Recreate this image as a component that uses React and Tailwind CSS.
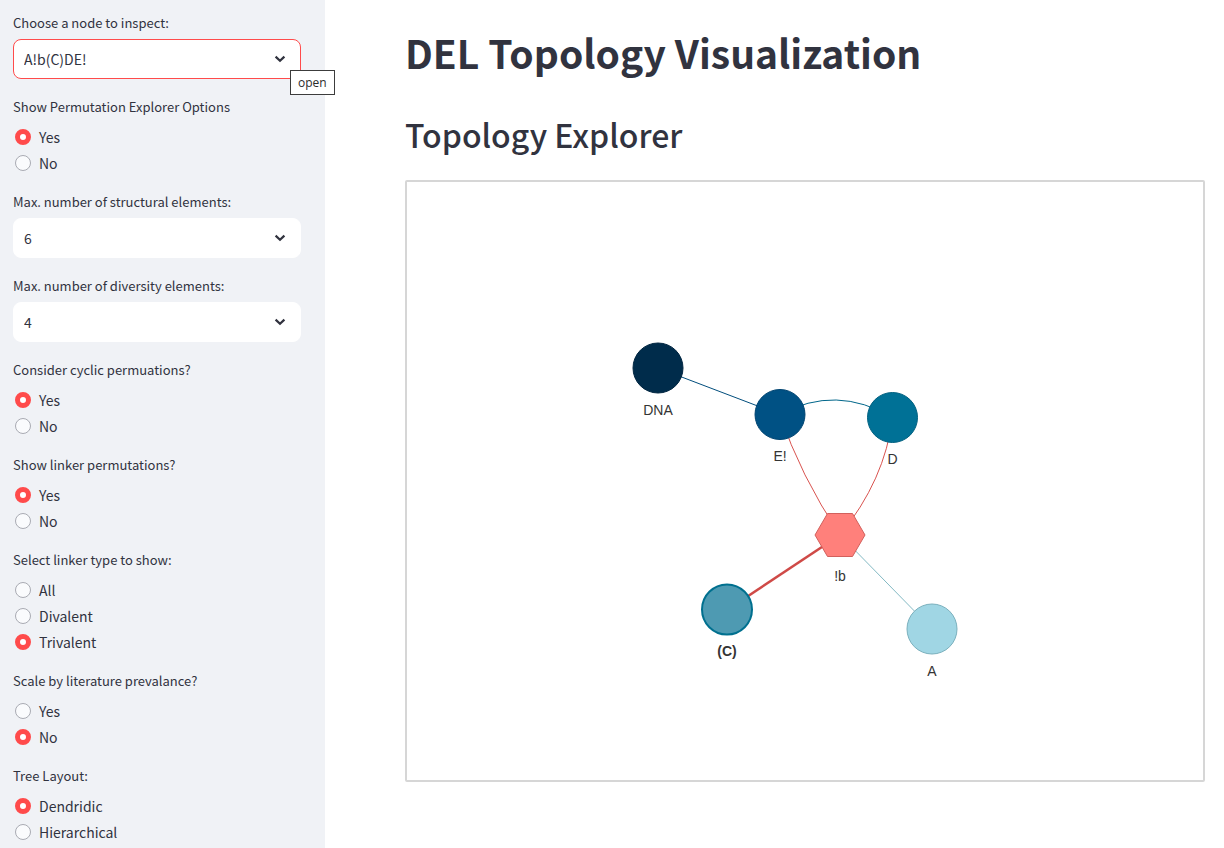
import { useId, useState } from "react";

function SelectField({ label, options, focused, hint }) {
  const id = useId();
  const [value, setValue] = useState(options[0]);
  return (
    <div className="flex flex-col gap-1 pb-4">
      <label htmlFor={id} className="text-[13px] leading-6">
        {label}
      </label>
      <div className="relative">
        <select
          id={id}
          value={value}
          onChange={(e) => setValue(e.target.value)}
          className={
            "block h-10 w-full appearance-none rounded-lg border bg-white pr-10 pl-2.5 text-sm outline-none " +
            (focused ? "border-[#ff4b4b]" : "border-white")
          }
        >
          {options.map((o) => (
            <option key={o}>{o}</option>
          ))}
        </select>
        <svg
          viewBox="0 0 16 16"
          className="pointer-events-none absolute top-3 right-3 size-4"
          fill="none"
          stroke="#31333f"
          strokeWidth="2.2"
          aria-hidden="true"
        >
          <path d="M2.600 5.600L7 9.800L11.400 5.600" />
        </svg>
        {hint && (
          <span
            role="tooltip"
            className="absolute top-[31px] left-[277px] border border-[#3c3c3c] bg-white px-[7px] font-['Open_Sans',sans-serif] text-xs leading-[23px] text-[#2b2b2b]"
          >
            {hint}
          </span>
        )}
      </div>
    </div>
  );
}

function RadioField({ label, options, initial }) {
  const name = useId();
  const [value, setValue] = useState(initial);
  return (
    <fieldset className="pb-3.5">
      <legend className="mb-[5px] text-[13px] leading-6">{label}</legend>
      {options.map((o) => (
        <label key={o} className="flex h-[26px] items-center gap-2 pl-0.5 text-sm leading-6">
          <input
            type="radio"
            name={name}
            checked={value === o}
            onChange={() => setValue(o)}
            className="size-4 shrink-0 appearance-none rounded-full border border-[#a9abb3] bg-[#fafbfd] checked:border-5 checked:border-[#ff4b4b] checked:bg-white"
          />
          {o}
        </label>
      ))}
    </fieldset>
  );
}

const nodes = [
  { label: "DNA", x: 251, y: 186, fill: "#002c4b", stroke: "#002540" },
  { label: "E!", x: 373, y: 232.5, fill: "#005184", stroke: "#004471" },
  { label: "D", x: 485.5, y: 235.5, fill: "#007196", stroke: "#006080" },
  { label: "(C)", x: 320, y: 427.5, fill: "#4e9ab2", stroke: "#00708f", active: true },
  { label: "A", x: 525, y: 447, fill: "#a0d6e4", stroke: "#7ab0bd" },
];

function TopologyGraph() {
  return (
    <svg
      width="796"
      height="598"
      viewBox="0 0 796 598"
      className="max-w-full"
      role="img"
      aria-label="Topology graph"
      fill="none"
    >
      <path d="M251 186L373 232.500" stroke="#004d7c" />
      <path d="M373 232.500Q429 202 485.500 235.500" stroke="#00668a" />
      <path d="M373 232.500Q393 293 433 353" stroke="#d9534f" />
      <path d="M485.500 235.500Q478 298 433 353" stroke="#d9534f" />
      <path d="M433 353L320 428" stroke="#cf4a47" strokeWidth="2.6" />
      <path d="M433 353L525 447" stroke="#84bac4" />
      {nodes.map((n) => (
        <g key={n.label}>
          <circle cx={n.x} cy={n.y} r="25" fill={n.fill} stroke={n.stroke} strokeWidth={n.active ? 2 : 1} />
          <text
            x={n.x}
            y={Math.floor(n.y) + 47}
            textAnchor="middle"
            className={"font-['Liberation_Sans',sans-serif] text-sm " + (n.active ? "font-bold" : "font-normal")}
            fill="#343434"
          >
            {n.label}
          </text>
        </g>
      ))}
      <path d="M408 353L420.500 331.500H445.500L458 353L445.500 374.500H420.500Z" fill="#ff807b" stroke="#d2605c" />
      <text
        x="433"
        y="399"
        textAnchor="middle"
        className="font-['Liberation_Sans',sans-serif] text-sm"
        fill="#343434"
      >
        !b
      </text>
    </svg>
  );
}

export default function App() {
  return (
    <div className="flex h-screen overflow-hidden bg-white font-['Noto_Sans_CJK_SC',sans-serif] text-[#31333f]">
      <aside className="w-[325px] shrink-0 bg-[#f0f2f6] pt-[11px] pr-6 pl-[13px]">
        <SelectField label="Choose a node to inspect:" options={["A!b(C)DE!"]} focused hint="open" />
        <RadioField label="Show Permutation Explorer Options" options={["Yes", "No"]} initial="Yes" />
        <SelectField label="Max. number of structural elements:" options={["6", "5", "4", "3"]} />
        <SelectField label="Max. number of diversity elements:" options={["4", "3", "2"]} />
        <RadioField label="Consider cyclic permuations?" options={["Yes", "No"]} initial="Yes" />
        <RadioField label="Show linker permutations?" options={["Yes", "No"]} initial="Yes" />
        <RadioField label="Select linker type to show:" options={["All", "Divalent", "Trivalent"]} initial="Trivalent" />
        <RadioField label="Scale by literature prevalance?" options={["Yes", "No"]} initial="No" />
        <RadioField label="Tree Layout:" options={["Dendridic", "Hierarchical"]} initial="Dendridic" />
      </aside>
      <main className="min-w-0 flex-1 overflow-hidden pt-[22px] pr-[19px] pl-20">
        <h1 className="text-[39px] leading-[60px] font-bold">DEL Topology Visualization</h1>
        <h2 className="mt-[26px] text-[32px] leading-[52px] font-medium">Topology Explorer</h2>
        <div className="mt-5 flex justify-center rounded-xs border-2 border-[#d6d6d6]">
          <TopologyGraph />
        </div>
      </main>
    </div>
  );
}
